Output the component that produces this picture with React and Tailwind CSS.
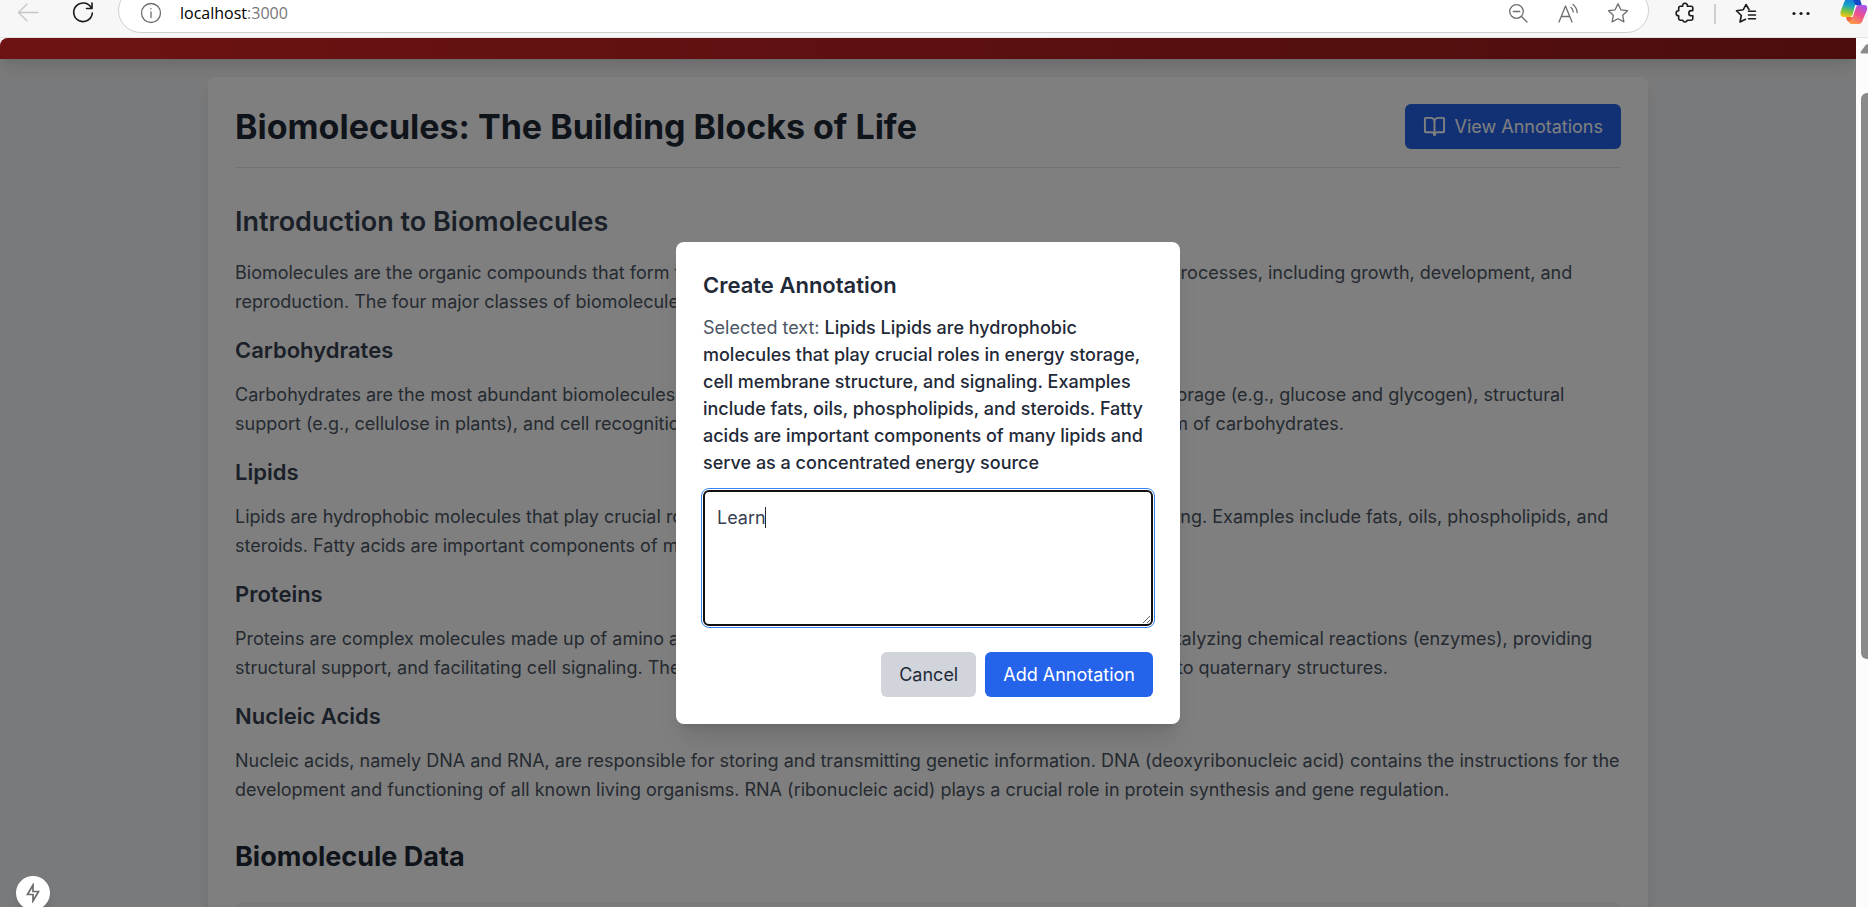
import React from "react";
import { BookOpen } from "lucide-react";

const sections = [
  {
    title: "Carbohydrates",
    text: "Carbohydrates are the most abundant biomolecules on Earth. These play numerous essential roles in energy storage (e.g., glucose and glycogen), structural support (e.g., cellulose in plants), and cell recognition. Monosaccharides such as ribose are the most basic form of carbohydrates.",
  },
  {
    title: "Lipids",
    text: "Lipids are hydrophobic molecules that play crucial roles in energy storage, cell membrane structure, and signaling. Examples include fats, oils, phospholipids, and steroids. Fatty acids are important components of many lipids and serve as a concentrated energy source.",
  },
  {
    title: "Proteins",
    text: "Proteins are complex molecules made up of amino acids. They perform a wide range of functions, including catalyzing chemical reactions (enzymes), providing structural support, and facilitating cell signaling. The structure of proteins is hierarchical, ranging from primary to quaternary structures.",
  },
  {
    title: "Nucleic Acids",
    text: "Nucleic acids, namely DNA and RNA, are responsible for storing and transmitting genetic information. DNA (deoxyribonucleic acid) contains the instructions for the development and functioning of all known living organisms. RNA (ribonucleic acid) plays a crucial role in protein synthesis and gene regulation.",
  },
];

function IconButton({ label, className = "w-6", children }) {
  return (
    <button type="button" aria-label={label} className={`flex h-6 shrink-0 items-center justify-center ${className}`}>
      {children}
    </button>
  );
}

function Stroke({ size = 24, width = 1.3, children }) {
  return (
    <svg width={size} height={size} viewBox="0 0 24 24" fill="none" stroke="currentColor" strokeWidth={width} strokeLinecap="round" strokeLinejoin="round">
      {children}
    </svg>
  );
}

function CopilotLogo() {
  return (
    <svg width="28" height="28" viewBox="0 0 28 28">
      <defs>
        <linearGradient id="cp-a" x1="0.5" y1="0" x2="0.3" y2="1">
          <stop offset="0" stopColor="#1b6fe0" />
          <stop offset="0.4" stopColor="#17a5c4" />
          <stop offset="0.7" stopColor="#7cc242" />
          <stop offset="1" stopColor="#f7c814" />
        </linearGradient>
        <linearGradient id="cp-b" x1="0.8" y1="0" x2="0.3" y2="1">
          <stop offset="0" stopColor="#a554ee" />
          <stop offset="0.5" stopColor="#ee4f8f" />
          <stop offset="1" stopColor="#fb9b48" />
        </linearGradient>
      </defs>
      <path d="M19 .5c-.6-.4-1.200-.5-2.500-.5H8.500C6 0 5 2 4.200 4L.8 13c-1 3.500 0 6 3 6h5.600c2 0 3-1.300 3.600-3.500L15.500 5c.5-2 1.500-3 3.500-3h1.800z" fill="url(#cp-a)" />
      <path d="M13 0h4.500c2 0 2.600 1.300 3.200 3.500l1.200 4h-4.200c-2 0-2.800-.8-3.200-2.500z" fill="#1746c8" />
      <path d="M8.500 23.500c.6 1.600 1.500 2.500 3 2.500h7c2.600 0 3.800-2 4.700-5l3.600-8.500c1-3.500 0-5.500-3-5.500h-4.600c-2 0-3 1.300-3.600 3.500l-3.100 9.500c-.6 2-1.500 3-3.500 3z" fill="url(#cp-b)" />
      <path d="M6 19h7c-.6 2.400-1.600 3.800-3.600 4.300l-.6.2c-1.500 0-2.100-1.500-2.800-4.500z" fill="#f4653f" />
    </svg>
  );
}

function BrowserBar() {
  return (
    <div className="flex h-[38px] shrink-0 items-start border-b border-[#e4e4e4] bg-[#f7f7f7] text-[#1b1b1b]">
      <div className="flex items-center pl-4">
        <IconButton label="Back" className="w-6 text-[#c6c6c6]">
          <Stroke><path d="M22 12.500H2.500M11 4l-8.500 8.500L11 21" /></Stroke>
        </IconButton>
        <IconButton label="Refresh" className="ml-[31px] w-6">
          <Stroke width={1.6}><path d="M20.300 8A9.300 9.300 0 1 0 21.300 13M21 3v5.500h-5.500" /></Stroke>
        </IconButton>
      </div>
      <div className="-mt-3 ml-[23px] flex h-[45px] flex-1 items-center rounded-full border border-[#cfcfcf] bg-white pt-1 pr-[18px] pl-5 text-[#6e6e6e]">
        <IconButton label="Site information">
          <Stroke><circle cx="12" cy="12" r="9.500" /><path d="M12 11v5.500M12 7.600v.3" /></Stroke>
        </IconButton>
        <div className="ml-[17px] flex-1 font-['Open_Sans',sans-serif] text-[16px] leading-6">
          <a href="#top" className="text-black">localhost<span className="text-[#767676]">:3000</span></a>
        </div>
        <div className="flex items-center gap-[26px]">
          <IconButton label="Zoom out">
            <Stroke><circle cx="10.500" cy="10.500" r="6.800" /><path d="M15.500 15.500L21 21M7.300 10.500h6.400" /></Stroke>
          </IconButton>
          <IconButton label="Read aloud">
            <Stroke><path d="M3 21L9.500 5 16 21M5.500 15.500h8M15 6.500c1.500 1.200 2.200 2.700 2.200 4.500M17 3.500c2.600 2 3.900 4.500 4.200 8" /></Stroke>
          </IconButton>
          <IconButton label="Add to favorites">
            <Stroke><path d="M12 2.800l2.900 6 6.600.9-4.800 4.600 1.200 6.600-5.900-3.200-5.900 3.200 1.200-6.600L2.500 9.700l6.600-.9z" /></Stroke>
          </IconButton>
        </div>
      </div>
      <div className="ml-6 flex items-start">
        <IconButton label="Extensions">
          <Stroke width={1.6}><path d="M7.500 6.300h2.200a2.400 2.400 0 1 1 4.600 0H18a1.800 1.800 0 0 1 1.800 1.800v2.500h-1.400a2.600 2.600 0 0 0 0 5.200h1.400V18.500a1.800 1.800 0 0 1-1.800 1.800h-3.700a2.400 2.400 0 0 1-4.600 0H7.500a1.800 1.800 0 0 1-1.800-1.800v-2.600a2.600 2.600 0 0 1 0-5.200V8.100a1.800 1.800 0 0 1 1.800-1.800z" /></Stroke>
        </IconButton>
        <span className="mt-1 ml-[17px] h-5 w-[2px] bg-[#cfcfcf]" />
        <IconButton label="Favorites" className="ml-[18px] w-6">
          <Stroke width={1.6}><path d="M15 9.500L12 4.500 9.300 9.700 2.500 10.800l4.800 4.700L6 22l5.500-2.700M14.500 11.200h7M14.500 15h7M14.500 18.800h7" /></Stroke>
        </IconButton>
        <IconButton label="Settings and more" className="ml-[31px] w-6">
          <svg width="24" height="24" fill="currentColor"><circle cx="5" cy="13.500" r="1.600" /><circle cx="12" cy="13.500" r="1.600" /><circle cx="19" cy="13.500" r="1.600" /></svg>
        </IconButton>
        <IconButton label="Copilot" className="ml-[27px] w-7"><CopilotLogo /></IconButton>
      </div>
    </div>
  );
}

function AnnotationDialog() {
  return (
    <div role="dialog" aria-labelledby="dialog-title" className="w-full max-w-[504px] rounded-lg bg-white p-[27px] shadow-xl">
      <h2 id="dialog-title" className="mb-[13px] text-[22px] leading-8 font-semibold text-[#1f2937]">Create Annotation</h2>
      <p className="mb-[14px] text-[18px] leading-[27px] text-[#4b5563]">
        Selected text:{" "}
        <span className="font-medium text-[#1f2937]">
          Lipids Lipids are hydrophobic molecules that play crucial roles in energy storage, cell membrane structure, and signaling. Examples include fats, oils, phospholipids, and steroids. Fatty acids are important components of many lipids and serve as a concentrated energy source
        </span>
      </p>
      <div className="relative">
        <textarea aria-labelledby="dialog-title" rows={4} defaultValue="Learn" className="block w-full rounded-md border-2 border-[#101010] px-3 py-3 text-[18px] leading-[27px] text-[#374151] outline-1 outline-offset-1 outline-[#3b82f6]" />
        <span className="absolute top-[17px] left-[62px] h-[21px] w-px bg-[#1f2937]" />
      </div>
      <div className="mt-[26px] flex justify-end gap-[9px] text-[18px] leading-[27px]">
        <button type="button" className="rounded-md bg-[#d1d5db] px-[18px] py-[9px] text-[#1f2937]">Cancel</button>
        <button type="button" className="rounded-md bg-[#2563eb] px-[18px] py-[9px] text-white">Add Annotation</button>
      </div>
    </div>
  );
}

function Scrollbar() {
  return (
    <div className="flex w-3 shrink-0 flex-col items-end overflow-hidden bg-[#fcfcfc]">
      <svg width="8" height="10" viewBox="0 0 8 10" className="mt-[6px] shrink-0 overflow-hidden">
        <path d="M2 9.500C.5 9.500.2 8.300 1 7.300L5.500 1.200C6.500 0 8 0 9 1.200V9.500z" fill="#8b8b8b" />
      </svg>
      <div className="mt-[39px] h-[566px] w-[7px] rounded-l-md bg-[#8b8b8b]" />
    </div>
  );
}

export default function App() {
  return (
    <div className="flex h-screen flex-col overflow-hidden bg-[#f7f7f7] font-['Inter',sans-serif]">
      <BrowserBar />
      <div className="flex min-h-0 flex-1">
        <div className="relative flex-1 overflow-hidden rounded-tl-lg bg-[#f3f4f6]">
          <header className="h-[21px] bg-linear-to-r from-[#dc2626] to-[#991b1b] shadow-lg" />
          <main className="mx-auto mt-[18px] max-w-[1440px] rounded-lg bg-white p-[27px] shadow-lg">
            <div className="mb-9 flex items-center justify-between border-b border-[#e5e7eb] pb-[18px]">
              <h1 className="text-[34px] leading-10 font-bold text-[#1f2937]">Biomolecules: The Building Blocks of Life</h1>
              <button type="button" className="flex items-center gap-[9px] rounded-md bg-[#2563eb] px-[18px] py-[9px] text-[18px] leading-[27px] text-white">
                <BookOpen size={23} strokeWidth={2} />
                View Annotations
              </button>
            </div>
            <h2 className="mb-[18px] text-[27px] leading-9 font-semibold text-[#374151]">Introduction to Biomolecules</h2>
            <p className="text-[18px] leading-[29px] text-[#4b5563]">
              Biomolecules are the organic compounds that form the base of life. They are essential to numerous biological processes, including growth, development, and reproduction. The four major classes of biomolecules are carbohydrates, lipids, proteins, and nucleic acids.
            </p>
            {sections.map((s) => (
              <section key={s.title} className="mt-[18px]">
                <h3 className="mb-[14px] text-[22px] leading-8 font-semibold text-[#374151]">{s.title}</h3>
                <p className="text-[18px] leading-[29px] text-[#4b5563]">{s.text}</p>
              </section>
            ))}
            <h2 className="mt-[35px] mb-[27px] text-[27px] leading-9 font-bold text-[#1f2937]">Biomolecule Data</h2>
            <div className="h-40 rounded-lg bg-[#f3f4f6]" />
          </main>
          <div className="absolute inset-0 flex items-center justify-center bg-black/50 pt-[21px]">
            <AnnotationDialog />
          </div>
          <button type="button" aria-label="Static route" className="absolute bottom-[-3px] left-4 flex h-[34px] w-[34px] items-center justify-center rounded-full bg-white text-[#6b6b6b] shadow-lg">
            <svg width="16" height="20" viewBox="0 0 16 20" fill="none" stroke="currentColor" strokeWidth="1.700"><path d="M8 2v6.500h5.500L8 18v-6.500H2.500z" /></svg>
          </button>
        </div>
        <Scrollbar />
      </div>
    </div>
  );
}
